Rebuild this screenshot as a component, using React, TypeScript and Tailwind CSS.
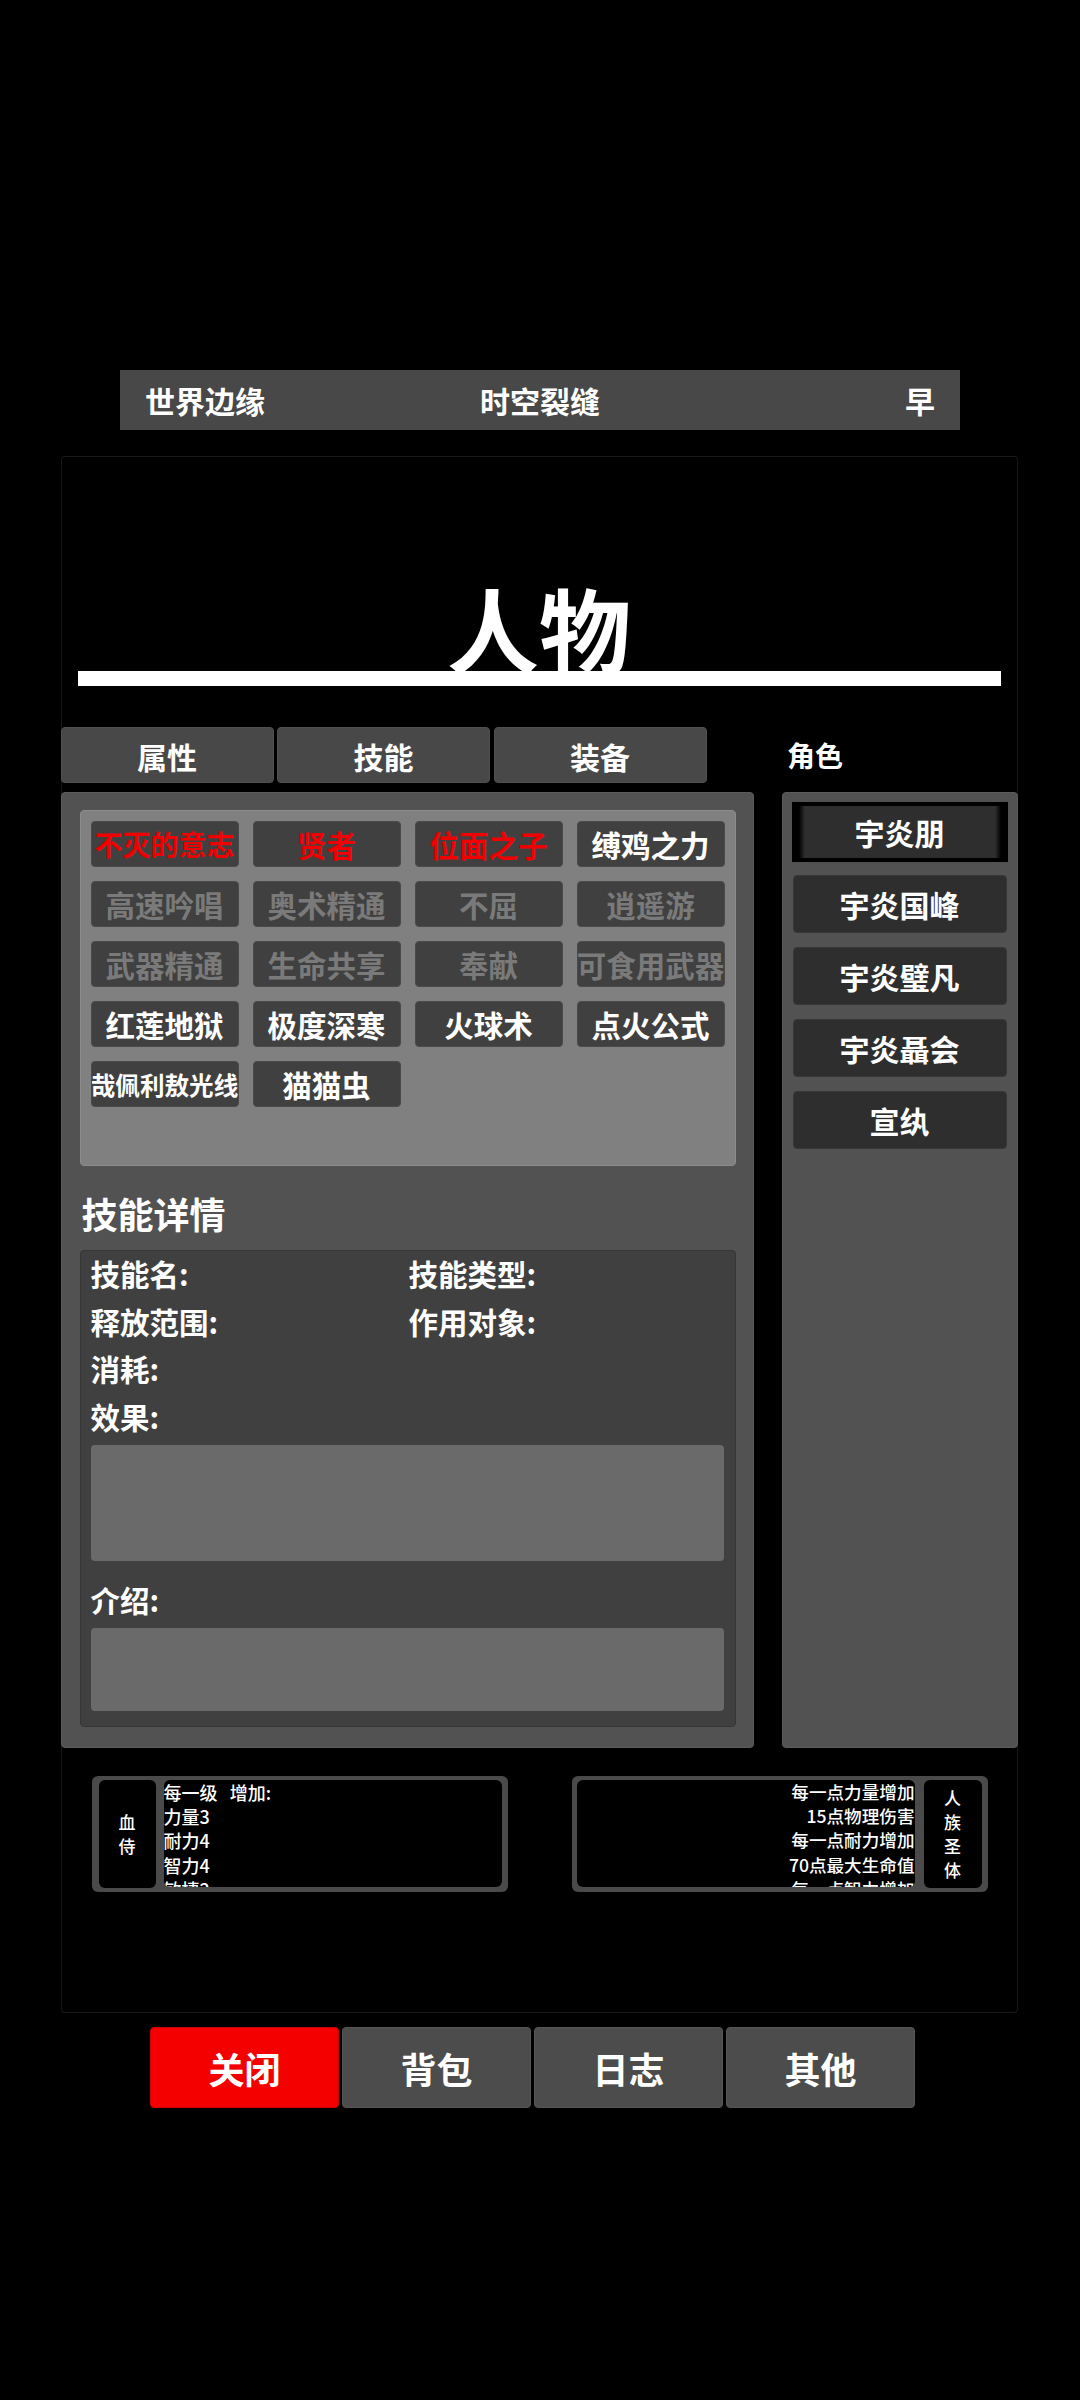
const cjk = "font-['Noto_Sans_CJK_SC','Noto_Sans',sans-serif]"

type Skill = { name: string; tone: 'red' | 'dim' | 'white'; size?: string }

const skills: Skill[] = [
  { name: '不灭的意志', tone: 'red', size: 'text-[28px]' },
  { name: '贤者', tone: 'red' },
  { name: '位面之子', tone: 'red' },
  { name: '缚鸡之力', tone: 'white' },
  { name: '高速吟唱', tone: 'dim' },
  { name: '奥术精通', tone: 'dim' },
  { name: '不屈', tone: 'dim' },
  { name: '逍遥游', tone: 'dim' },
  { name: '武器精通', tone: 'dim' },
  { name: '生命共享', tone: 'dim' },
  { name: '奉献', tone: 'dim' },
  { name: '可食用武器', tone: 'dim' },
  { name: '红莲地狱', tone: 'white' },
  { name: '极度深寒', tone: 'white' },
  { name: '火球术', tone: 'white' },
  { name: '点火公式', tone: 'white' },
  { name: '哉佩利敖光线', tone: 'white', size: 'text-[24.6px]' },
  { name: '猫猫虫', tone: 'white' },
]

const toneClass = {
  red: 'text-[#f00000]',
  dim: 'text-[#7a7a7a]',
  white: 'text-white',
}

function SkillButton({ skill }: { skill: Skill }) {
  return (
    <div
      className={`flex h-[46px] w-[148px] items-center justify-center overflow-hidden whitespace-nowrap rounded-[4px] border border-[#4a4a4a] bg-[#404040] font-bold ${
        skill.size ?? 'text-[29.5px]'
      } ${toneClass[skill.tone]}`}
    >
      {skill.name}
    </div>
  )
}

function Tab({ label }: { label: string }) {
  return (
    <div className="flex h-[56px] w-[213px] items-center justify-center rounded-[4px] border border-[#505050] bg-[#484848] pt-[2px] text-[30px] font-bold text-white">
      {label}
    </div>
  )
}

function BottomButton({ label, active }: { label: string; active?: boolean }) {
  return (
    <div
      className={`flex h-[81px] w-[189px] items-center justify-center rounded-[4px] border text-[36px] font-bold text-white ${
        active ? 'border-[#d00000] bg-[#f40000]' : 'border-[#555555] bg-[#4c4c4c]'
      }`}
    >
      {label}
    </div>
  )
}

function DetailLabel({ label }: { label: string }) {
  return <div className="h-[47.6px] text-[29.5px] font-semibold leading-[40px] text-white">{label}</div>
}

function Character({ name }: { name: string }) {
  return (
    <div className="flex h-[58px] w-[214px] items-center justify-center rounded-[4px] border border-[#383838] bg-[#2e2e2e] text-[30px] font-bold text-white">
      {name}
    </div>
  )
}

export default function App() {
  return (
    <div className={`flex min-h-[2400px] w-[1080px] flex-col items-center bg-black pt-[370px] ${cjk}`}>
      <div className="grid h-[60px] w-[840px] grid-cols-3 items-center bg-[#484848] px-[25px] text-[30px] font-semibold text-white">
        <span>世界边缘</span>
        <span className="text-center">时空裂缝</span>
        <span className="text-right">早</span>
      </div>

      <div className="mt-[26px] ml-[-2px] flex h-[1557px] w-[957px] flex-col rounded-[4px] shadow-[inset_0_0_0_1px_#191919]">
        <div className="flex h-[215px] items-end justify-center text-[92px] font-bold leading-[88px] text-white">
          人物
        </div>
        <div className="mx-[17px] h-[15px] bg-white" />

        <div className="mt-[41px] flex h-[56px] items-center gap-[3.5px]">
          <Tab label="属性" />
          <Tab label="技能" />
          <Tab label="装备" />
          <div className="ml-[77px] text-[28px] font-semibold text-white">角色</div>
        </div>

        <div className="mt-[9px] flex h-[956px] justify-between">
          <div className="flex w-[693px] flex-col rounded-[4px] border border-[#5c5c5c] bg-[#525252] pt-[17px] pl-[18px]">
            <div className="h-[356px] w-[656px] rounded-[4px] border border-[#8c8c8c] bg-[#808080] pt-[10px] pl-[10px]">
              <div className="grid grid-cols-[148px_148px_148px_148px] gap-x-[14px] gap-y-[14px]">
                {skills.map(s => (
                  <SkillButton key={s.name} skill={s} />
                ))}
              </div>
            </div>

            <div className="mt-[24px] h-[60px] pl-[2px] text-[36px] font-semibold leading-[47px] text-white">技能详情</div>

            <div className="h-[477px] w-[656px] rounded-[4px] border border-[#363636] bg-[#404040] pt-[2px] pl-[10px]">
              <div className="grid grid-cols-[318px_1fr]">
                <DetailLabel label="技能名:" />
                <DetailLabel label="技能类型:" />
                <DetailLabel label="释放范围:" />
                <DetailLabel label="作用对象:" />
              </div>
              <DetailLabel label="消耗:" />
              <DetailLabel label="效果:" />
              <div className="mt-[2px] h-[116px] w-[633px] rounded-[4px] bg-[#6a6a6a]" />
              <div className="mt-[18px] h-[47.6px] text-[29.5px] font-semibold leading-[40px] text-white">介绍:</div>
              <div className="mt-[1px] h-[83px] w-[633px] rounded-[4px] bg-[#6a6a6a]" />
            </div>
          </div>

          <div className="flex w-[236px] flex-col items-center gap-[14px] rounded-[4px] border border-[#5c5c5c] bg-[#525252] pt-[9px]">
            <div className="-mb-px flex h-[60px] w-[216px] items-center justify-center bg-black py-[4px]">
              <div className="flex h-[52px] w-full items-center justify-center bg-[linear-gradient(90deg,#000_3.2%,#2e2e2e_6%,#2e2e2e_94%,#000_96.8%)] text-[30px] font-bold text-white">
                宇炎朋
              </div>
            </div>
            <Character name="宇炎国峰" />
            <Character name="宇炎璧凡" />
            <Character name="宇炎聶会" />
            <Character name="宣纨" />
          </div>
        </div>

        <div className="mt-[28px] flex justify-between pr-[30px] pl-[31px]">
          <div className="flex h-[116px] w-[416px] gap-[8px] rounded-[6px] bg-[#4a4a4a] py-[4px] pr-[6px] pl-[7px]">
            <div className="flex w-[57px] flex-col items-center justify-center rounded-[6px] bg-black text-[17px] leading-[24px] font-medium text-white">
              <span>血</span>
              <span>侍</span>
            </div>
            <div className="h-[107px] flex-1 overflow-hidden rounded-[6px] bg-black text-[18px] leading-[24.2px] font-medium whitespace-pre text-white">
              <div>每一级   增加:</div>
              <div>力量3</div>
              <div>耐力4</div>
              <div>智力4</div>
              <div>敏捷2</div>
            </div>
          </div>

          <div className="flex h-[116px] w-[416px] gap-[9px] rounded-[6px] bg-[#4a4a4a] py-[4px] pr-[6px] pl-[5px]">
            <div className="h-[107px] flex-1 overflow-hidden rounded-[6px] bg-black text-right text-[17.6px] leading-[24.2px] font-medium text-white">
              <div>每一点力量增加</div>
              <div>15点物理伤害</div>
              <div>每一点耐力增加</div>
              <div>70点最大生命值</div>
              <div>每一点智力增加</div>
            </div>
            <div className="flex w-[58px] flex-col items-center justify-center rounded-[6px] bg-black text-[17px] leading-[24px] font-medium text-white">
              <span>人</span>
              <span>族</span>
              <span>圣</span>
              <span>体</span>
            </div>
          </div>
        </div>
      </div>

      <div className="mt-[14px] ml-[-15px] flex gap-[3px]">
        <BottomButton label="关闭" active />
        <BottomButton label="背包" />
        <BottomButton label="日志" />
        <BottomButton label="其他" />
      </div>
    </div>
  )
}
